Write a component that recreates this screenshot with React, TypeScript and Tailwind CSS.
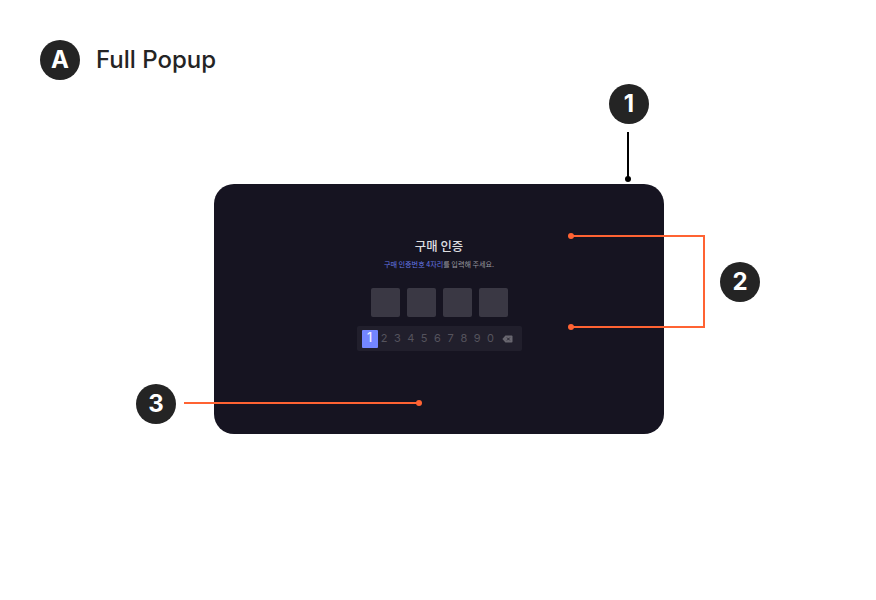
import React from 'react';

const digits = ['2', '3', '4', '5', '6', '7', '8', '9', '0'];

function Badge({ label, className = '' }: { label: string; className?: string }) {
  return (
    <div
      className={`flex size-10 items-center justify-center rounded-full bg-[#242424] text-2xl font-bold leading-none text-white ${className}`}
    >
      {label}
    </div>
  );
}

function BackspaceIcon() {
  return (
    <svg className="ml-[5px] h-[8px] w-[11px]" viewBox="0 0 11 8">
      <path d="M3.4 0.5H9.6Q10.5 0.5 10.5 1.4V6.6Q10.5 7.5 9.6 7.5H3.4L0.4 4Z" fill="#68666f" />
      <path d="M5 2.6L7.8 5.4M7.8 2.6L5 5.4" stroke="#22202d" strokeWidth="0.9" />
    </svg>
  );
}

function Popup() {
  return (
    <div className="flex h-[250px] w-[450px] flex-col items-center rounded-[20px] bg-[#161421] pt-[53px] font-['Inter','Noto_Sans_CJK_KR',sans-serif]">
      <h2 className="h-[18px] whitespace-nowrap font-['Noto_Sans_CJK_KR',sans-serif] text-[12.4px] font-medium leading-[18px] text-[#dddde0]">
        구매 인증
      </h2>
      <p className="mt-[3px] h-[12px] whitespace-nowrap font-['Noto_Sans_CJK_KR',sans-serif] text-[7.1px] leading-[12px] text-[#9b9aa0]">
        <span className="text-[#6577e5]">구매 인증번호 4자리</span>를 입력해 주세요.
      </p>
      <div className="mt-[18px] flex gap-[7px]">
        {[0, 1, 2, 3].map((i) => (
          <div key={i} className="size-[29px] rounded-[2px] bg-[#3a3844]" />
        ))}
      </div>
      <div className="mt-[9px] flex h-[25px] w-[165px] items-center rounded-[2px] bg-[#211f2c] pl-[5px] text-[11px] text-[#55535d]">
        <div className="flex h-[18px] w-[16px] items-center justify-center rounded-[1px] bg-[#7386ff] text-[12.5px] font-medium text-[#eef0ff]">
          1
        </div>
        {digits.map((d) => (
          <span key={d} className="w-[13.3px] text-center leading-none">
            {d}
          </span>
        ))}
        <BackspaceIcon />
      </div>
    </div>
  );
}

export default function App() {
  return (
    <main className="relative h-[600px] w-[876px] overflow-hidden bg-white font-['Inter',sans-serif] text-[#242424]">
      <header className="flex h-20 items-end gap-4 pl-10">
        <Badge label="A" />
        <h1 className="text-2xl font-medium leading-10">Full Popup</h1>
      </header>
      <div className="ml-[214px] mt-[104px] w-fit">
        <Popup />
      </div>
      <svg className="absolute left-0 top-0" width="876" height="600" fill="none" strokeWidth="2">
        <path d="M628 132V179" stroke="#000" />
        <circle cx="628" cy="179" r="3" fill="#000" />
        <path d="M571 236H704V327H571" stroke="#ff6333" />
        <circle cx="571" cy="236" r="3" fill="#ff6333" />
        <circle cx="571" cy="327" r="3" fill="#ff6333" />
        <path d="M184 403H419" stroke="#ff6333" />
        <circle cx="419" cy="403" r="3" fill="#ff6333" />
      </svg>
      <Badge label="1" className="absolute left-[609px] top-[84px]" />
      <Badge label="2" className="absolute left-[720px] top-[262px]" />
      <Badge label="3" className="absolute left-[136px] top-[384px]" />
    </main>
  );
}
